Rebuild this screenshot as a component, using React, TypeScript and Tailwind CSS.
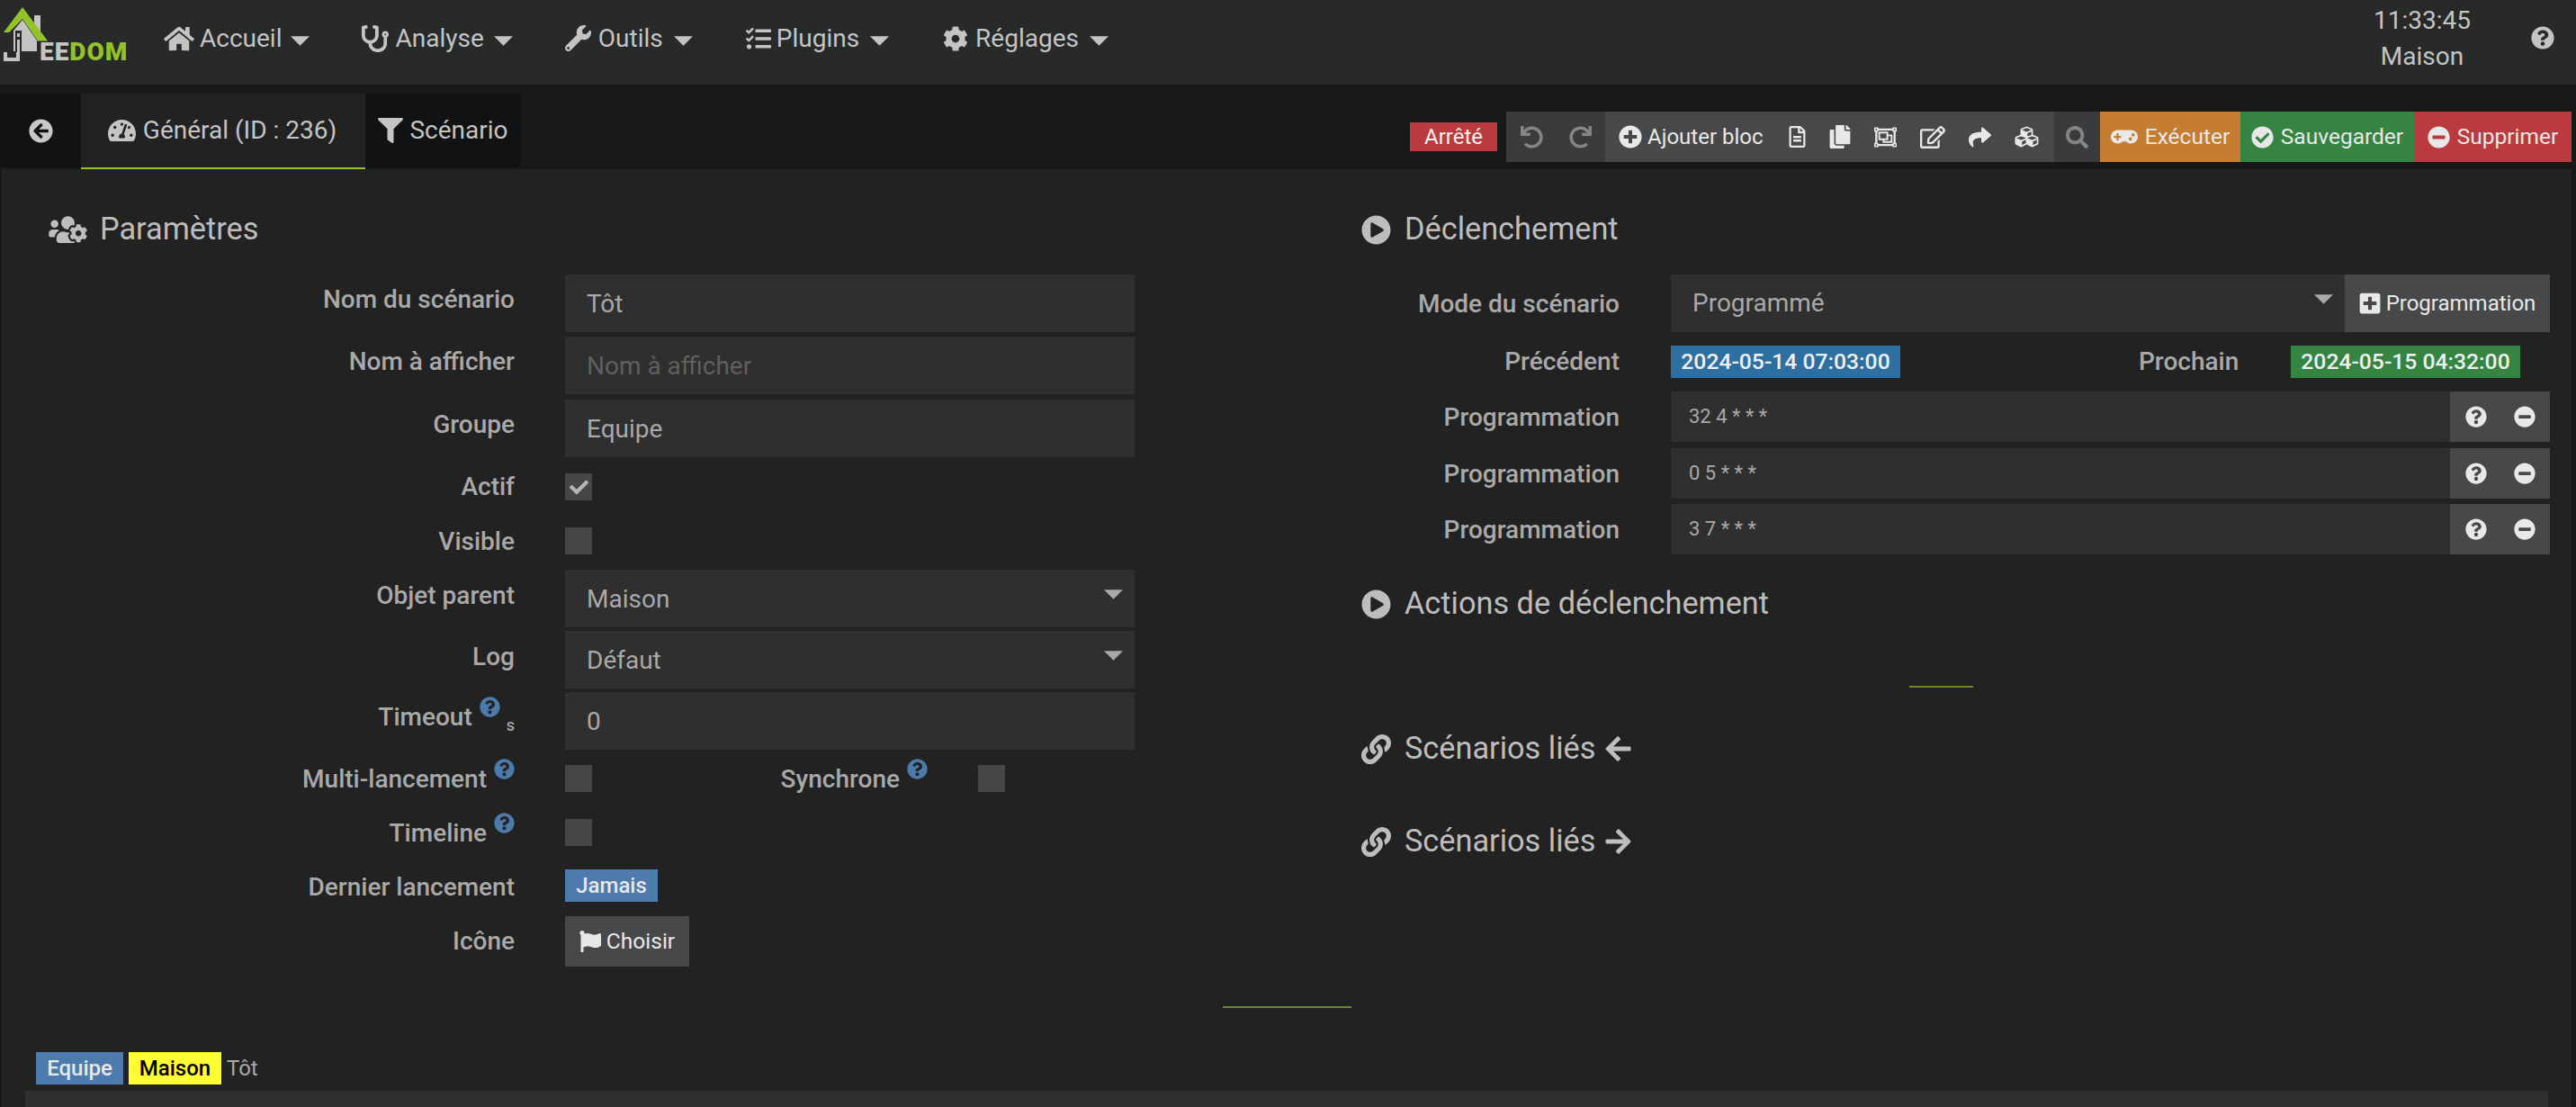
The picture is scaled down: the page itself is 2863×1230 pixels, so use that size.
import type { ReactNode } from 'react';
import {
  FaHome, FaStethoscope, FaWrench, FaTasks, FaCog, FaQuestionCircle, FaArrowCircleLeft, FaTachometerAlt,
  FaFilter, FaUsersCog, FaPlayCircle, FaLink, FaArrowLeft, FaArrowRight, FaUndo, FaRedo, FaPlusCircle,
  FaRegFileAlt, FaCopy, FaRegObjectGroup, FaRegEdit, FaShare, FaCubes, FaSearch, FaGamepad, FaCheckCircle,
  FaMinusCircle, FaFlag, FaPlusSquare, FaCheck,
} from 'react-icons/fa';

const navItems = [
  { label: 'Accueil', icon: <FaHome className="w-[34px] h-[30px]" />, gap: 'gap-[6px]', caret: 'ml-[4px]' },
  { label: 'Analyse', icon: <FaStethoscope className="w-[30px] h-[30px]" />, gap: 'gap-[7px]', caret: 'ml-[4px]' },
  { label: 'Outils', icon: <FaWrench className="w-[29px] h-[29px]" />, gap: 'gap-[8px]', caret: 'ml-[4px]' },
  { label: 'Plugins', icon: <FaTasks className="w-[30px] h-[28px]" />, gap: 'gap-[5px]', caret: 'ml-[7px]' },
  { label: 'Réglages', icon: <FaCog className="w-[28px] h-[28px]" />, gap: 'gap-[8px] ml-[2px]', caret: 'ml-[4px]' },
];

const triggers = ['32 4 * * *', '0 5 * * *', '3 7 * * *'];

function Caret() {
  return (
    <svg viewBox="0 0 22 11" className="w-[21px] h-[11px] shrink-0 fill-current">
      <path d="M0 0h22L11 11z" />
    </svg>
  );
}

function Logo() {
  return (
    <div className="relative w-[140px] h-[94px] shrink-0">
      <svg viewBox="0 0 60 94" className="w-[60px] h-[94px]">
        <path d="M38 30V17h7v19z" fill="#c4c4c4" />
        <path d="M15 34L25 22 41 45v12H15z" fill="#c4c4c4" />
        <path d="M4 36L25 8 53 45.5H42L25 21 10 36z" fill="#93c32a" />
        <rect x="17" y="34" width="7" height="24" fill="#27292a" />
        <rect x="19" y="44" width="3" height="14" fill="#c4c4c4" />
        <rect x="19" y="37" width="3" height="4" fill="#c4c4c4" />
        <path d="M4 58v10h18V58h-4v6H8v-6z" fill="#c4c4c4" />
      </svg>
      <span className="absolute left-[44px] top-[44px] text-[28px] leading-[28px] font-black tracking-[1px] whitespace-nowrap">
        <span className="text-[#c4c4c4]">EE</span>
        <span className="text-[#93c32a]">DOM</span>
      </span>
    </div>
  );
}

function SectionTitle({ icon, children, className }: { icon: ReactNode; children: ReactNode; className: string }) {
  return (
    <div className={`flex items-center h-[34px] text-[34.3px] text-[#bdbdbd] ${className}`}>
      {icon}
      {children}
    </div>
  );
}

function Label({ children, className = '' }: { children: ReactNode; className?: string }) {
  return (
    <div className={`w-[572px] shrink-0 flex justify-end items-center font-medium ${className}`}>{children}</div>
  );
}

function Help() {
  return <FaQuestionCircle className="w-[23px] h-[23px] ml-[8px] mb-[23px] text-[#4c7aa9] shrink-0" />;
}

function TextRow({ label, value, placeholder, className }: { label: string; value?: string; placeholder?: string; className: string }) {
  return (
    <div className={`flex h-[64px] ${className}`}>
      <Label className="pb-[9px]">{label}</Label>
      <input
        readOnly
        value={value}
        placeholder={placeholder}
        className="ml-[56px] w-[633px] h-full bg-[#2f2f2f] pl-[24px] pt-[1px] outline-none text-[#a9a9a9] placeholder:text-[#5f5f5f]"
      />
    </div>
  );
}

function SelectRow({ label, value, className }: { label: string; value: string; className: string }) {
  return (
    <div className={`flex h-[64px] ${className}`}>
      <Label className="pb-[7px]">{label}</Label>
      <div className="ml-[56px] w-[633px] h-full bg-[#2f2f2f] pl-[24px] pr-[13px] flex justify-between text-[#a9a9a9]">
        <span className="self-center pt-[2px]">{value}</span>
        <span className="mt-[22px]"><Caret /></span>
      </div>
    </div>
  );
}

function Checkbox({ checked }: { checked?: boolean }) {
  return (
    <div className="w-[30px] h-[30px] bg-[#454648] flex items-center justify-center shrink-0 text-[#b5b5b5]">
      {checked && <FaCheck className="w-[25px] h-[21px]" />}
    </div>
  );
}

function ActionButton({ icon, label, className }: { icon: ReactNode; label: string; className: string }) {
  return (
    <div className={`h-full flex items-center justify-center gap-[8px] text-[24.5px] text-[#e8e8e8] ${className}`}>
      {icon}
      {label}
    </div>
  );
}

export default function App() {
  return (
    <div className="w-full h-screen overflow-hidden bg-[#181818] font-['Roboto',sans-serif] text-[28px] text-[#a9a9a9]">
      <header className="h-[94px] bg-[#282a29] flex items-center text-[#c4c4c4]">
        <Logo />
        <nav className="ml-[42px] flex items-center gap-[58px] mb-[9px]">
          {navItems.map((item) => (
            <div key={item.label} className={`flex items-center ${item.gap}`}>
              {item.icon}
              <span>{item.label}</span>
              <span className={`${item.caret} mt-[6px]`}><Caret /></span>
            </div>
          ))}
        </nav>
        <div className="ml-auto w-[108px] flex flex-col items-center gap-[16px] leading-[24px] mb-[8px]">
          <span>11:33:45</span>
          <span>Maison</span>
        </div>
        <FaQuestionCircle className="ml-[67px] mr-[24px] w-[26px] h-[26px] mb-[10px]" />
      </header>

      <div className="h-[94px] pt-[10px] bg-[#181818] pr-[5px] flex">
        <div className="flex h-[84px] items-stretch">
          <div className="w-[90px] h-[82px] bg-[#111213] flex items-center justify-center text-[#c8c8c8]">
            <FaArrowCircleLeft className="w-[27px] h-[27px]" />
          </div>
          <div className="w-[316px] bg-[#222222] border-b-[2px] border-[#93c32a] flex items-center justify-center gap-[8px] pr-[2px] text-[#c4c4c4]">
            <FaTachometerAlt className="w-[31px] h-[28px]" />
            Général (ID : 236)
          </div>
          <div className="w-[173px] h-[82px] bg-[#111213] flex items-center justify-center gap-[7px] text-[#c4c4c4]">
            <FaFilter className="w-[28px] h-[28px]" />
            Scénario
          </div>
        </div>

        <div className="ml-auto flex items-center h-[56px] mt-[20px]">
          <div className="w-[97px] h-[32px] bg-[#b93a3f] text-[#f0f0f0] text-[24px] flex items-center justify-center mr-[10px]">
            Arrêté
          </div>
          <div className="w-[110px] h-full bg-[#3a3b3d] flex items-center justify-center gap-[29px] text-[#858585]">
            <FaUndo className="w-[25px] h-[25px]" />
            <FaRedo className="w-[25px] h-[25px]" />
          </div>
          <div className="w-[499px] h-full bg-[#47484a] flex items-center pl-[15px] gap-[26px] text-[#e8e8e8]">
            <span className="flex items-center gap-[6px] text-[24px] mr-[2px]">
              <FaPlusCircle className="w-[26px] h-[26px]" />
              Ajouter bloc
            </span>
            <FaRegFileAlt className="w-[19px] h-[24px]" />
            <FaCopy className="w-[24px] h-[26px]" />
            <FaRegObjectGroup className="w-[25px] h-[25px]" />
            <FaRegEdit className="w-[28px] h-[25px]" />
            <FaShare className="w-[25px] h-[25px]" />
            <FaCubes className="w-[27px] h-[26px]" />
          </div>
          <div className="w-[51px] h-full bg-[#3a3b3d] flex items-center justify-center text-[#858585]">
            <FaSearch className="w-[25px] h-[25px]" />
          </div>
          <ActionButton icon={<FaGamepad className="w-[30px] h-[26px]" />} label="Exécuter" className="w-[156px] bg-[#c47d31]" />
          <ActionButton icon={<FaCheckCircle className="w-[25px] h-[25px]" />} label="Sauvegarder" className="w-[193px] bg-[#358442]" />
          <ActionButton icon={<FaMinusCircle className="w-[25px] h-[25px]" />} label="Supprimer" className="w-[175px] bg-[#b93a3f]" />
        </div>
      </div>

      <main className="h-[1042px] ml-[2px] mr-[5px] bg-[#222222] overflow-hidden">
        <div className="flex">
          <section className="w-[1478px] shrink-0 -ml-[2px]">
            <SectionTitle className="mt-[50px] pl-[54px]" icon={<FaUsersCog className="w-[43px] h-[34px] mr-[14px]" />}>
              Paramètres
            </SectionTitle>
            <TextRow className="mt-[33px]" label="Nom du scénario" value="Tôt" />
            <TextRow className="mt-[5px]" label="Nom à afficher" placeholder="Nom à afficher" />
            <TextRow className="mt-[6px]" label="Groupe" value="Equipe" />
            <div className="flex h-[30px] mt-[18px]">
              <Label>Actif</Label>
              <div className="ml-[56px]"><Checkbox checked /></div>
            </div>
            <div className="flex h-[30px] mt-[30px]">
              <Label className="pt-[2px]">Visible</Label>
              <div className="ml-[56px]"><Checkbox /></div>
            </div>
            <SelectRow className="mt-[17px]" label="Objet parent" value="Maison" />
            <SelectRow className="mt-[4px]" label="Log" value="Défaut" />
            <div className="flex h-[64px] mt-[4px]">
              <Label className="pb-[9px]">
                Timeout
                <Help />
                <span className="text-[18px] ml-[7px] mt-[18px]">s</span>
              </Label>
              <input readOnly value="0" className="ml-[56px] w-[633px] h-full bg-[#2f2f2f] pl-[24px] outline-none text-[#a9a9a9]" />
            </div>
            <div className="flex h-[30px] mt-[17px] items-center">
              <Label className="pt-[2px]">Multi-lancement<Help /></Label>
              <div className="ml-[56px]"><Checkbox /></div>
              <div className="w-[373px] pt-[2px] flex justify-end items-center font-medium">Synchrone<Help /></div>
              <div className="ml-[56px]"><Checkbox /></div>
            </div>
            <div className="flex h-[30px] mt-[30px] items-center">
              <Label className="pt-[2px]">Timeline<Help /></Label>
              <div className="ml-[56px]"><Checkbox /></div>
            </div>
            <div className="flex h-[36px] mt-[26px] items-center">
              <Label className="pt-[3px]">Dernier lancement</Label>
              <div className="ml-[56px] w-[103px] h-full bg-[#4e7bad] text-[#e8e8e8] text-[24px] font-medium flex items-center justify-center">
                Jamais
              </div>
            </div>
            <div className="flex h-[56px] mt-[16px] items-center">
              <Label>Icône</Label>
              <div className="ml-[56px] w-[138px] h-full bg-[#47484a] text-[#e8e8e8] text-[24.5px] flex items-center justify-center gap-[6px]">
                <FaFlag className="w-[24px] h-[24px]" />
                Choisir
              </div>
            </div>
          </section>

          <section className="w-[1360px] shrink-0">
            <SectionTitle className="mt-[50px] pl-[35px]" icon={<FaPlayCircle className="w-[33px] h-[33px] mr-[15px]" />}>
              Déclenchement
            </SectionTitle>
            <div className="flex h-[64px] mt-[33px]">
              <div className="w-[322px] shrink-0 text-right font-medium pt-[12px]">Mode du scénario</div>
              <div className="ml-[57px] w-[749px] bg-[#2f2f2f] pl-[24px] pr-[13px] flex justify-between">
                <span className="self-center">Programmé</span>
                <span className="mt-[22px]"><Caret /></span>
              </div>
              <div className="w-[228px] bg-[#47484a] text-[#e8e8e8] text-[24px] flex items-center justify-center gap-[6px]">
                <FaPlusSquare className="w-[24px] h-[26px]" />
                Programmation
              </div>
            </div>
            <div className="flex h-[36px] mt-[15px] items-center">
              <div className="w-[322px] shrink-0 text-right font-medium">Précédent</div>
              <div className="ml-[57px] w-[255px] h-full bg-[#2c6fa0] text-[#efefef] text-[24.7px] font-medium flex items-center justify-center">
                2024-05-14 07:03:00
              </div>
              <div className="ml-[265px] w-[112px] font-medium">Prochain</div>
              <div className="ml-[57px] w-[255px] h-full bg-[#358442] text-[#efefef] text-[24.7px] font-medium flex items-center justify-center">
                2024-05-15 04:32:00
              </div>
            </div>
            {triggers.map((value, i) => (
              <div key={value} className={`flex h-[56px] ${i === 0 ? 'mt-[15px]' : i === 1 ? 'mt-[7px]' : 'mt-[6px]'}`}>
                <div className="w-[322px] shrink-0 text-right font-medium pt-[8px]">Programmation</div>
                <div className="ml-[57px] w-[866px] bg-[#2f2f2f] pl-[20px] flex items-center text-[22px] pb-[1px]">{value}</div>
                <div className="w-[111px] bg-[#47484a] text-[#e8e8e8] flex items-center justify-center gap-[30px] pb-[1px]">
                  <FaQuestionCircle className="w-[24px] h-[24px]" />
                  <FaMinusCircle className="w-[24px] h-[24px]" />
                </div>
              </div>
            ))}
            <SectionTitle className="mt-[38px] pl-[35px]" icon={<FaPlayCircle className="w-[33px] h-[33px] mr-[15px]" />}>
              Actions de déclenchement
            </SectionTitle>
            <div className="mt-[74px] ml-[644px] w-[71px] h-[2px] bg-[#6c8a2b]" />
            <SectionTitle className="mt-[51px] pl-[35px]" icon={<FaLink className="w-[33px] h-[33px] mr-[15px]" />}>
              Scénarios liés
              <FaArrowLeft className="w-[33px] h-[32px] ml-[9px]" />
            </SectionTitle>
            <SectionTitle className="mt-[69px] pl-[35px]" icon={<FaLink className="w-[33px] h-[33px] mr-[15px]" />}>
              Scénarios liés
              <FaArrowRight className="w-[33px] h-[32px] ml-[9px]" />
            </SectionTitle>
          </section>
        </div>

        <div className="mt-[44px] w-[143px] h-[2px] bg-[#6c8a2b] mx-auto" />
        <div className="mt-[49px] ml-[38px] h-[36px] flex items-center gap-[6px] text-[24px]">
          <span className="w-[97px] h-full bg-[#4e7bad] text-[#e8e8e8] font-medium flex items-center justify-center">Equipe</span>
          <span className="w-[103px] h-full bg-[#ffff33] text-black font-medium flex items-center justify-center">Maison</span>
          <span>Tôt</span>
        </div>
        <div className="mt-[7px] ml-[26px] w-[2804px] h-[60px] bg-[#2f2f2f]" />
      </main>
    </div>
  );
}
